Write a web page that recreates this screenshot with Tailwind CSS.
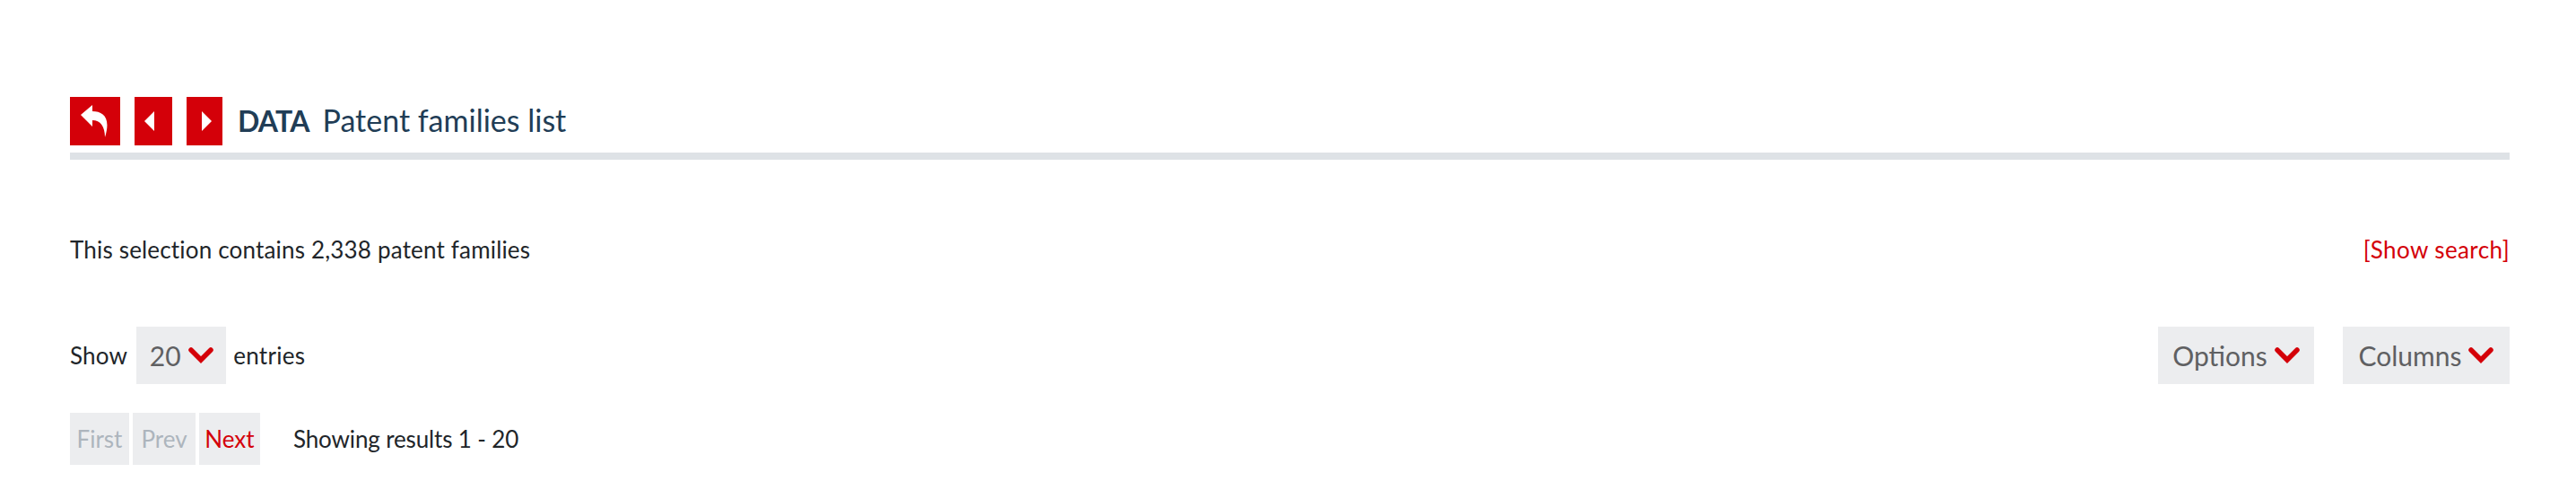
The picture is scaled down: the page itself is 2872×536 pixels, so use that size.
<!DOCTYPE html>
<html><head><script src="https://cdn.jsdelivr.net/npm/@tailwindcss/browser@4"></script></head>
<body class="bg-white">
<div class="w-[2872px] h-[536px] overflow-hidden pl-[78px] pr-[74px] pt-[108px] font-['Lato','Liberation_Sans',sans-serif] text-[26px] text-[#212529]">
  <div class="flex items-center h-[54px]">
    <div class="flex items-center justify-center w-[56px] h-[54px] bg-[#d40009]"><svg width="32" height="36" viewBox="0 0 32 36"><path fill="#fff" d="M0 11 L13 0 L13 7 C25 7 34 14 27 36 C27 24 22 17 13 17 L13 24 Z"/></svg></div>
    <div class="flex items-center justify-center w-[42px] h-[54px] pr-[8px] bg-[#d40009] ml-[16px]"><svg width="12" height="22" viewBox="0 0 12 22"><path fill="#fff" d="M11 0 L0 11 L11 22 Z"/></svg></div>
    <div class="flex items-center justify-center w-[40px] h-[54px] pl-[3px] bg-[#d40009] ml-[16px]"><svg width="12" height="22" viewBox="0 0 12 22"><path fill="#fff" d="M1 0 L12 11 L1 22 Z"/></svg></div>
    <div class="ml-[17px] pb-[3px] text-[34px] text-[#213d56] flex gap-[15px] items-baseline"><b class="font-bold text-[32px] tracking-[-0.8px]">DATA</b><span>Patent families list</span></div>
  </div>
  <div class="h-[8px] bg-[#dee2e6] mt-[8px]"></div>
  <div class="flex justify-between items-center mt-[82px] h-[36px]">
    <span class="tracking-[0.18px]">This selection contains 2,338 patent families</span>
    <a class="text-[#d40009] tracking-[0.4px]">[Show search]</a>
  </div>
  <div class="flex justify-between items-center mt-[68px] h-[64px]">
    <div class="flex items-center">
      <span class="tracking-[0.2px]">Show</span>
      <div class="ml-[10px] w-[100px] h-[64px] bg-[#ecedef] flex items-center justify-center gap-[8px] text-[#5f6062] text-[30px]">20<svg width="28" height="18" viewBox="0 0 28 18"><path d="M3 3 L14 14 L25 3" fill="none" stroke="#d40009" stroke-width="5.5" stroke-linecap="round"/></svg></div>
      <span class="ml-[8px] tracking-[0.3px]">entries</span>
    </div>
    <div class="flex items-center gap-[32px] text-[#5f6062] text-[30px]">
      <div class="w-[174px] h-[64px] bg-[#ecedef] flex items-center justify-center gap-[8px]">Options<svg width="28" height="18" viewBox="0 0 28 18"><path d="M3 3 L14 14 L25 3" fill="none" stroke="#d40009" stroke-width="5.5" stroke-linecap="round"/></svg></div>
      <div class="w-[186px] h-[64px] bg-[#ecedef] flex items-center justify-center gap-[8px]">Columns<svg width="28" height="18" viewBox="0 0 28 18"><path d="M3 3 L14 14 L25 3" fill="none" stroke="#d40009" stroke-width="5.5" stroke-linecap="round"/></svg></div>
    </div>
  </div>
  <div class="flex items-center mt-[32px] h-[58px]">
    <div class="w-[66px] h-[58px] bg-[#ecedef] flex items-center justify-center text-[#adb5bd]">First</div>
    <div class="w-[70px] h-[58px] ml-[4px] bg-[#ecedef] flex items-center justify-center text-[#adb5bd]">Prev</div>
    <div class="w-[68px] h-[58px] ml-[4px] bg-[#ecedef] flex items-center justify-center text-[#d40009]">Next</div>
    <span class="ml-[37px] tracking-[-0.14px]">Showing results 1 - 20</span>
  </div>
</div>
</body></html>
